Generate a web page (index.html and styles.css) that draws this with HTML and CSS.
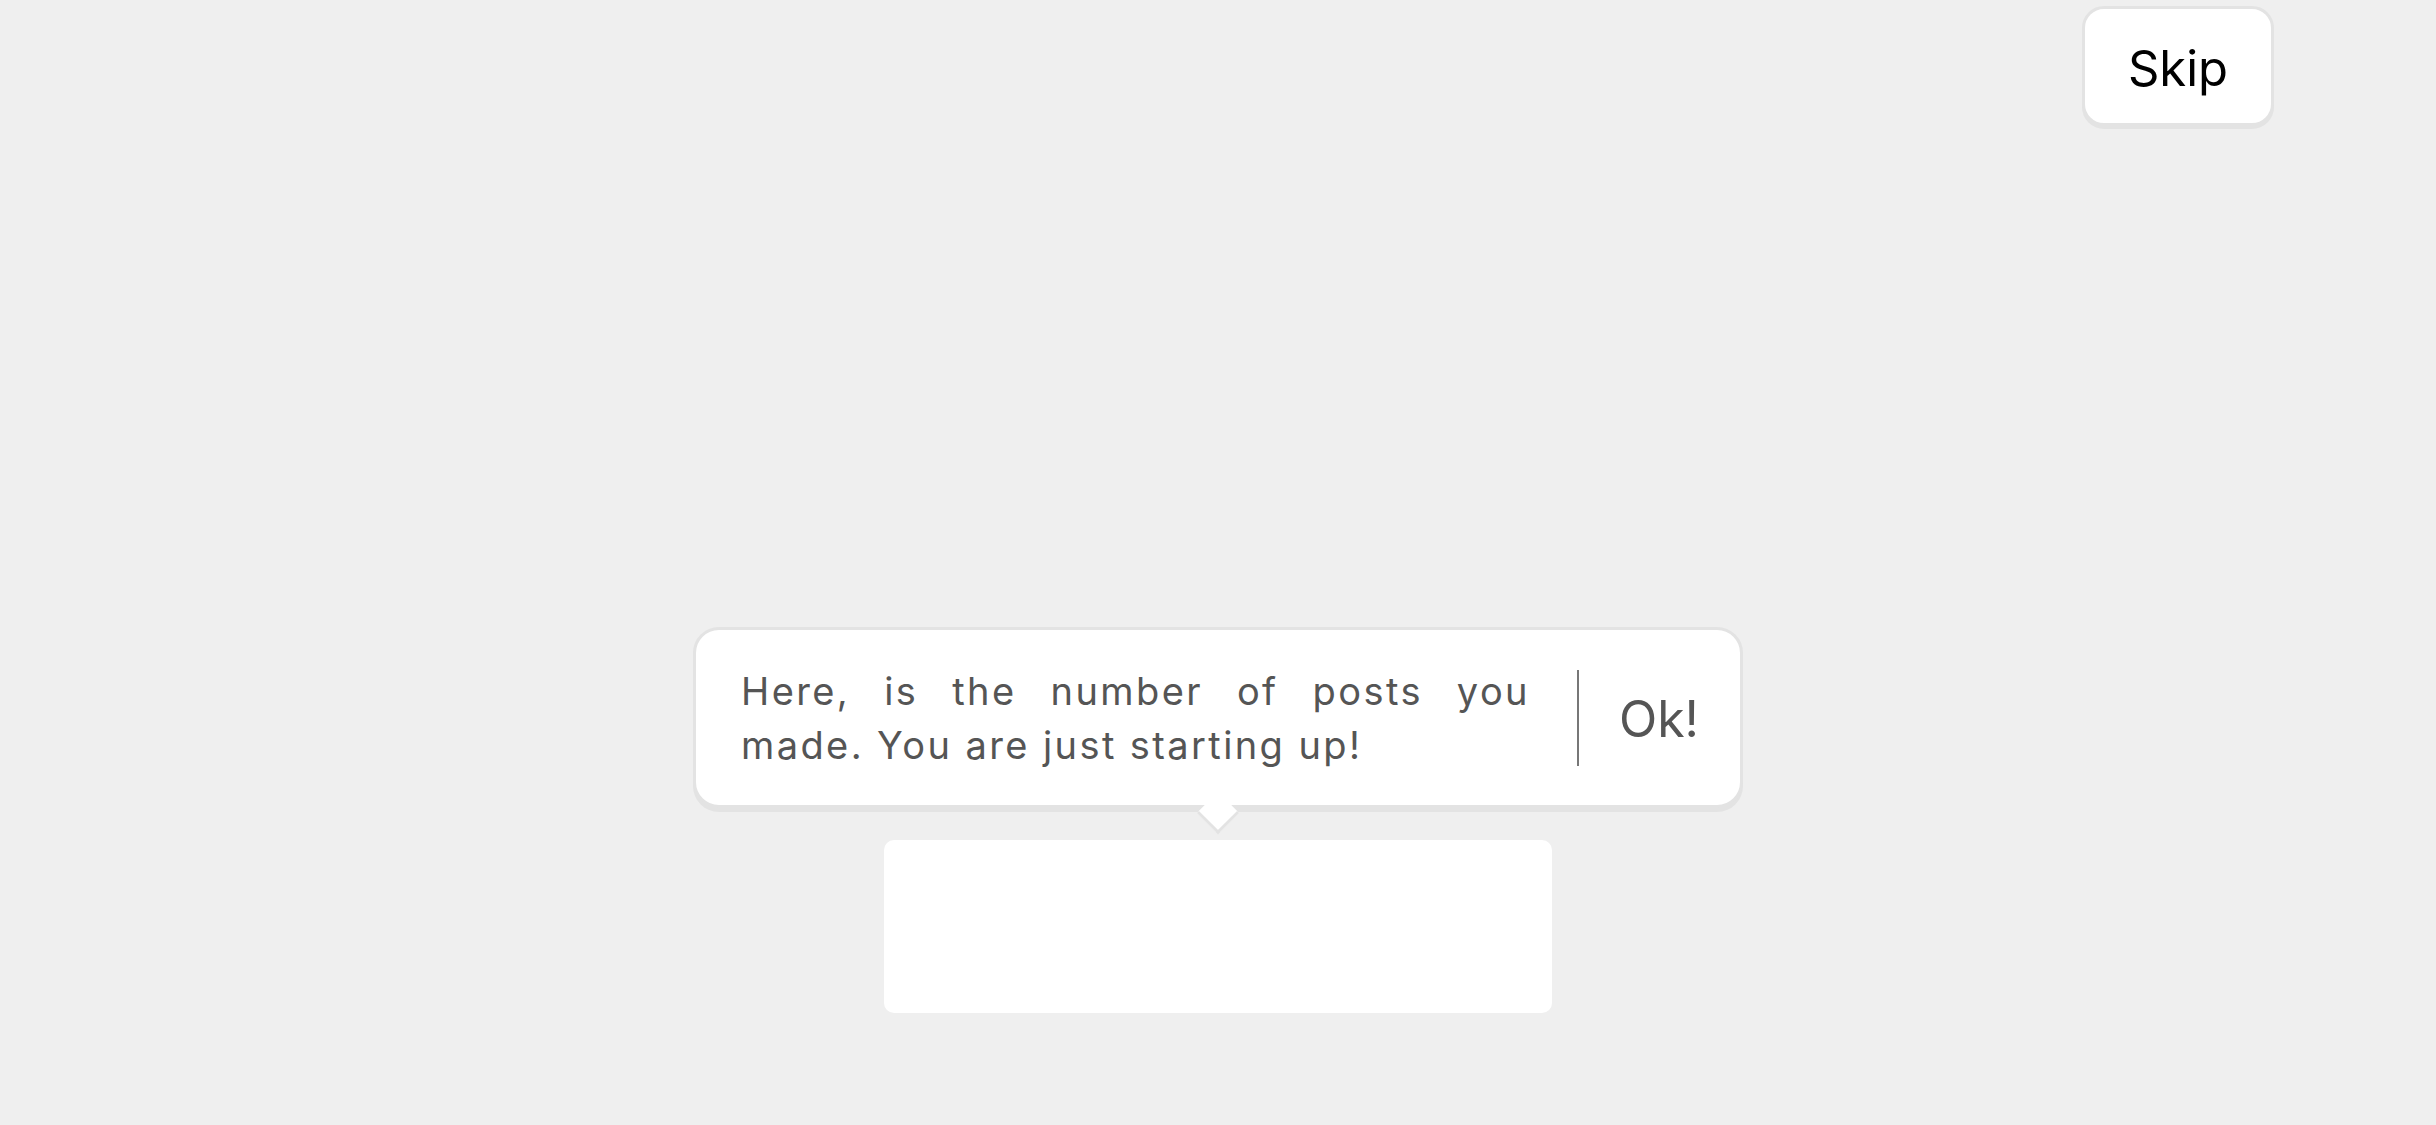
FILE: index.html
```html
<!DOCTYPE html>
<html lang="en">
<head>
<meta charset="utf-8">
<title>Tour</title>
<link rel="stylesheet" href="styles.css">
</head>
<body>
  <div class="topbar">
    <button class="skip">Skip</button>
  </div>
  <main class="stage">
    <div class="tooltip">
      <p class="tip-text"><span class="line-first">Here, is the number of posts you</span> made. You are just starting up!</p>
      <span class="divider"></span>
      <button class="ok">Ok!</button>
      <span class="arrow"></span>
    </div>
    <div class="target"></div>
  </main>
</body>
</html>
```

FILE: styles.css
```css
html, body {
  margin: 0;
  padding: 0;
}
body {
  background: #efefef;
  width: 2436px;
  height: 1125px;
  overflow: hidden;
  font-family: Inter, Roboto, "Liberation Sans", Arial, sans-serif;
}
.topbar {
  display: flex;
  justify-content: flex-end;
  padding: 6px 162px 0 0;
}
.skip {
  box-sizing: border-box;
  width: 192px;
  height: 120px;
  background: #fff;
  border: 3px solid #e3e3e3;
  border-radius: 22px;
  box-shadow: 0 3px 0 #e3e3e3;
  font-family: Inter, "Liberation Sans", Arial, sans-serif;
  font-size: 49px;
  color: #000;
  padding: 5px 0 0 0;
  margin: 0;
}
.stage {
  display: flex;
  flex-direction: column;
  align-items: center;
  margin-top: 501px;
}
.tooltip {
  position: relative;
  box-sizing: border-box;
  width: 1050px;
  height: 181px;
  background: #fff;
  border: 3px solid #e3e3e3;
  border-radius: 26px;
  box-shadow: 0 4px 0 #e3e3e3;
  display: flex;
  align-items: center;
  padding: 0 41px 0 45px;
}
.tip-text {
  flex: 1;
  margin: 0;
  font-size: 38px;
  line-height: 54px;
  letter-spacing: 2.4px;
  color: #555;
  text-align: justify;
}
.line-first {
  display: block;
  text-align: justify;
  text-align-last: justify;
}
.divider {
  width: 2px;
  height: 96px;
  background: #777;
  margin: 0 40px 0 47px;
}
.ok {
  background: none;
  border: 0;
  padding: 0;
  margin: 2px 0 0 0;
  font-family: Inter, Roboto, "Liberation Sans", Arial, sans-serif;
  font-size: 50px;
  color: #555;
}
.arrow {
  position: absolute;
  left: 50%;
  bottom: -23px;
  width: 30px;
  height: 30px;
  box-sizing: border-box;
  margin-left: -15px;
  background: #fff;
  border-right: 3px solid #e3e3e3;
  border-bottom: 3px solid #e3e3e3;
  transform: rotate(45deg);
}
.target {
  margin-top: 32px;
  width: 668px;
  height: 173px;
  background: #fff;
  border-radius: 10px;
}
```
